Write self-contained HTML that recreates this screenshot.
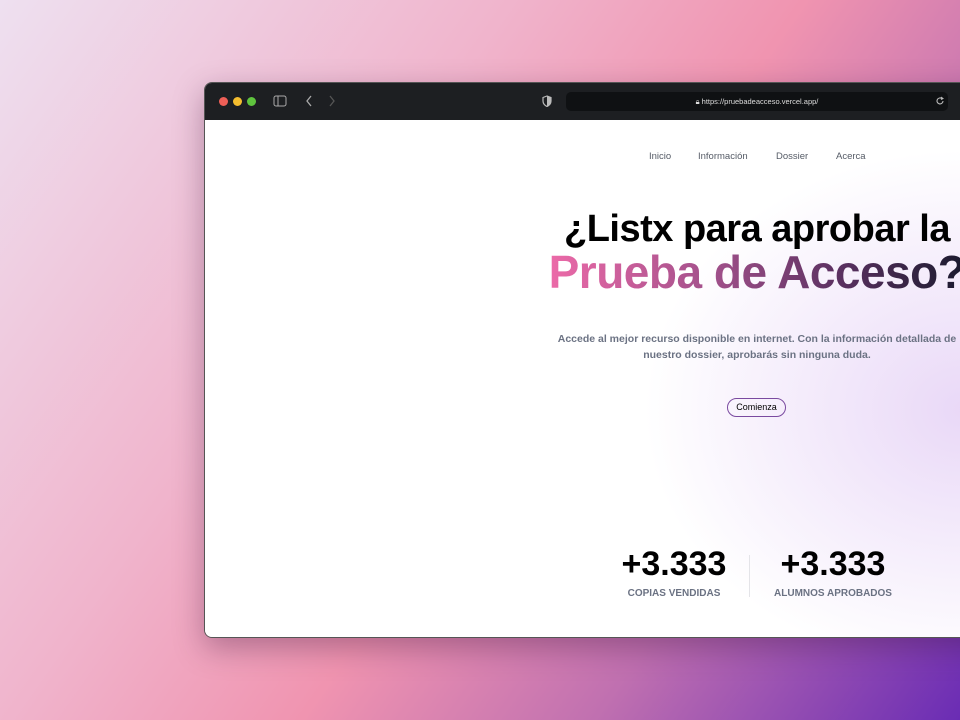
<!DOCTYPE html>
<html><head><meta charset="utf-8"><style>
html,body{margin:0;width:960px;height:720px;overflow:hidden}
body{position:relative;background:linear-gradient(125deg,#eee0f0 0%,#f0b4cc 35%,#f094b0 55%,#c070b0 75%,#6a2cb4 100%);font-family:"Liberation Sans",sans-serif}
.win{position:absolute;left:204px;top:82px;width:1104px;height:554px;border-radius:8px;overflow:hidden;box-shadow:0 10px 30px rgba(60,20,60,.35);border:1px solid #555}
.bar{height:37px;background:#1d1f22;position:relative}
.dot{position:absolute;top:14px;width:9px;height:9px;border-radius:50%}
.url{position:absolute;left:361px;top:9px;width:382px;height:19px;background:#0f1113;border-radius:5px;color:#ddd;font-size:7.5px;line-height:19px;text-align:center}
.page{position:absolute;top:37px;left:0;right:0;bottom:0;background:radial-gradient(ellipse 320px 260px at 760px 290px,#e9d8f7 0%,rgba(255,255,255,0) 100%),#fff}
.nav{position:absolute;top:31px;font-size:9.5px;color:#555b66}
.c{position:absolute;left:0;width:1104px;text-align:center}
h1{margin:0;font-weight:bold;letter-spacing:-0.5px}
.num{position:absolute;font-size:34px;font-weight:bold;color:#000;text-align:center;width:200px}
.lab{position:absolute;font-size:10px;font-weight:bold;color:#6b7283;text-align:center;width:200px}
</style></head><body>
<div class="win">
 <div class="bar">
  <div class="dot" style="left:14px;background:#ee5f57"></div>
  <div class="dot" style="left:28px;background:#f4bd2f"></div>
  <div class="dot" style="left:42px;background:#5fc43e"></div>
  <svg style="position:absolute;left:68px;top:12px" width="14" height="12"><rect x="1" y="1" width="12" height="10" rx="2" fill="none" stroke="#aaa"/><line x1="5" y1="1" x2="5" y2="11" stroke="#aaa"/></svg>
  <svg style="position:absolute;left:100px;top:12px" width="8" height="12"><path d="M6 1L2 6l4 5" fill="none" stroke="#aaa" stroke-width="1.3"/></svg>
  <svg style="position:absolute;left:123px;top:12px" width="8" height="12"><path d="M2 1l4 5-4 5" fill="none" stroke="#555" stroke-width="1.3"/></svg>
  <svg style="position:absolute;left:337px;top:12px" width="10" height="12"><path d="M5 1L1 2.5v3.5c0 3 2 4.5 4 5.5 2-1 4-2.5 4-5.5V2.5z" fill="none" stroke="#bbb" stroke-width="1.2"/><path d="M5 1v10.5c2-1 4-2.5 4-5.5V2.5z" fill="#bbb"/></svg>
  <div class="url">🔒︎ https://pruebadeacceso.vercel.app/</div>
  <svg style="position:absolute;left:730px;top:13px" width="10" height="10"><path d="M8 5a3 3 0 1 1-1-2.3" fill="none" stroke="#bbb" stroke-width="1.1"/><path d="M6 1l2 1.5-2 1" fill="none" stroke="#bbb"/></svg>
 </div>
 <div class="page">
  <span class="nav" style="left:444px">Inicio</span>
  <span class="nav" style="left:493px">Información</span>
  <span class="nav" style="left:571px">Dossier</span>
  <span class="nav" style="left:631px">Acerca</span>
  <div class="c" style="top:88px"><h1 style="font-size:38px;color:#000">¿Listx para aprobar la</h1></div>
  <div class="c" style="top:125px"><h1 style="font-size:46px;display:inline-block;background:linear-gradient(90deg,#ec6aa8,#a0508a 40%,#5a3060 70%,#1a1a2e);-webkit-background-clip:text;background-clip:text;color:transparent">Prueba de Acceso?</h1></div>
  <div class="c" style="top:211px;font-size:10.5px;font-weight:bold;color:#6b7283;line-height:16px">Accede al mejor recurso disponible en internet. Con la información detallada de<br>nuestro dossier, aprobarás sin ninguna duda.</div>
  <div style="position:absolute;left:522px;top:278px;width:57px;height:17px;border:1px solid #7a4aa0;border-radius:10px;font-size:9px;line-height:17px;text-align:center;color:#000">Comienza</div>
  <div class="num" style="left:369px;top:425px">+3.333</div>
  <div class="lab" style="left:369px;top:468px">COPIAS VENDIDAS</div>
  <div style="position:absolute;left:544px;top:435px;width:1px;height:42px;background:#e4e4e8"></div>
  <div class="num" style="left:528px;top:425px">+3.333</div>
  <div class="lab" style="left:528px;top:468px">ALUMNOS APROBADOS</div>
 </div>
</div>
</body></html>
